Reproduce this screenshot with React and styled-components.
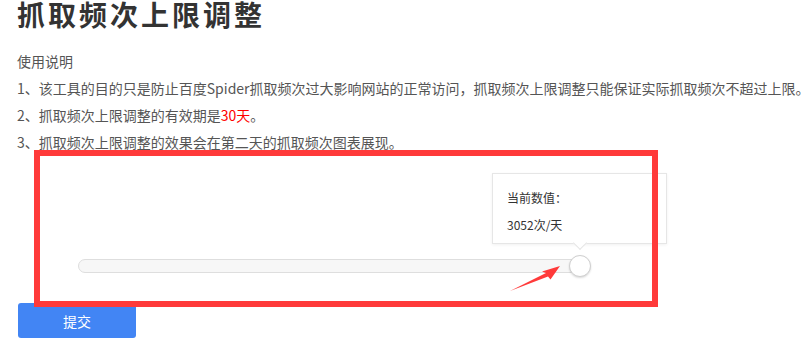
import React from "react";
import styled, { createGlobalStyle } from "styled-components";

const GlobalStyle = createGlobalStyle`
  html, body {
    margin: 0;
    padding: 0;
    background: #fff;
  }

  body {
    font-family: "Noto Sans CJK SC", "Noto Sans", sans-serif;
    color: #555;
  }
`;

const Page = styled.div`
  position: relative;
  width: 811px;
  height: 351px;
  overflow: hidden;
  padding: 0 17px;
  box-sizing: border-box;
`;

const Title = styled.h1`
  margin: 0 0 20px;
  font-size: 28px;
  line-height: 28px;
  font-weight: bold;
  letter-spacing: 3px;
  color: #333;
`;

const Notes = styled.div`
  font-size: 14px;
  line-height: 27px;
  color: #555;
  white-space: nowrap;

  p {
    margin: 0;
  }

  em {
    font-style: normal;
    color: #f00;
  }
`;

const SliderRow = styled.div`
  position: relative;
  margin: 103px 0 0 61px;
  width: 500px;
  height: 14px;
`;

const Track = styled.div`
  height: 100%;
  box-sizing: border-box;
  border: 1px solid #dedede;
  border-radius: 7px;
  background: #f7f7f7;
`;

const Thumb = styled.div`
  position: absolute;
  left: 491px;
  top: -4px;
  width: 22px;
  height: 22px;
  box-sizing: border-box;
  border-radius: 50%;
  border: 1px solid #cfcfcf;
  background: #fff;
  box-shadow: 0 1px 2px rgba(0, 0, 0, 0.15);
`;

const Tooltip = styled.div`
  position: absolute;
  left: 414px;
  bottom: calc(100% + 15px);
  width: 175px;
  box-sizing: border-box;
  padding: 10px 14px 5px;
  border: 1px solid #e6e6e6;
  background: #fff;
  box-shadow: 0 1px 3px rgba(0, 0, 0, 0.06);
  font-size: 12px;
  line-height: 27px;
  color: #333;

  p {
    margin: 0;
  }

  &::after {
    content: "";
    position: absolute;
    left: 82px;
    bottom: -5px;
    width: 9px;
    height: 9px;
    background: #fff;
    border-right: 1px solid #e6e6e6;
    border-bottom: 1px solid #e6e6e6;
    transform: rotate(45deg);
  }
`;

const SubmitButton = styled.button`
  display: block;
  margin: 30px 0 0 1px;
  width: 118px;
  height: 35px;
  border: none;
  border-radius: 3px;
  background: #4285f4;
  color: #fff;
  font-family: inherit;
  font-size: 14px;
  cursor: pointer;
`;

// red marks drawn on top of the screenshot
const MarkBox = styled.div`
  position: absolute;
  left: 34px;
  top: 150px;
  width: 624px;
  height: 157px;
  box-sizing: border-box;
  border: 6px solid #ff3a3a;
  pointer-events: none;
`;

const MarkArrow = styled.svg`
  position: absolute;
  left: 0;
  top: 0;
  pointer-events: none;
`;

const App = () => {
  return (
    <>
      <GlobalStyle />
      <Page>
        <Title>抓取频次上限调整</Title>
        <Notes>
          <p>使用说明</p>
          <p>1、该工具的目的只是防止百度Spider抓取频次过大影响网站的正常访问，抓取频次上限调整只能保证实际抓取频次不超过上限。</p>
          <p>
            2、抓取频次上限调整的有效期是<em>30天</em>。
          </p>
          <p>3、抓取频次上限调整的效果会在第二天的抓取频次图表展现。</p>
        </Notes>

        <SliderRow>
          <Track />
          <Thumb />
          <Tooltip>
            <p>当前数值：</p>
            <p>3052次/天</p>
          </Tooltip>
        </SliderRow>

        <SubmitButton>提交</SubmitButton>

        <MarkBox />
        <MarkArrow width="811" height="351" viewBox="0 0 811 351">
          <polygon
            points="510,291 546,273 542,271.5 560,266 550.5,279.5 548,276.5"
            fill="#ff3a3a"
          />
        </MarkArrow>
      </Page>
    </>
  );
};

export default App;
